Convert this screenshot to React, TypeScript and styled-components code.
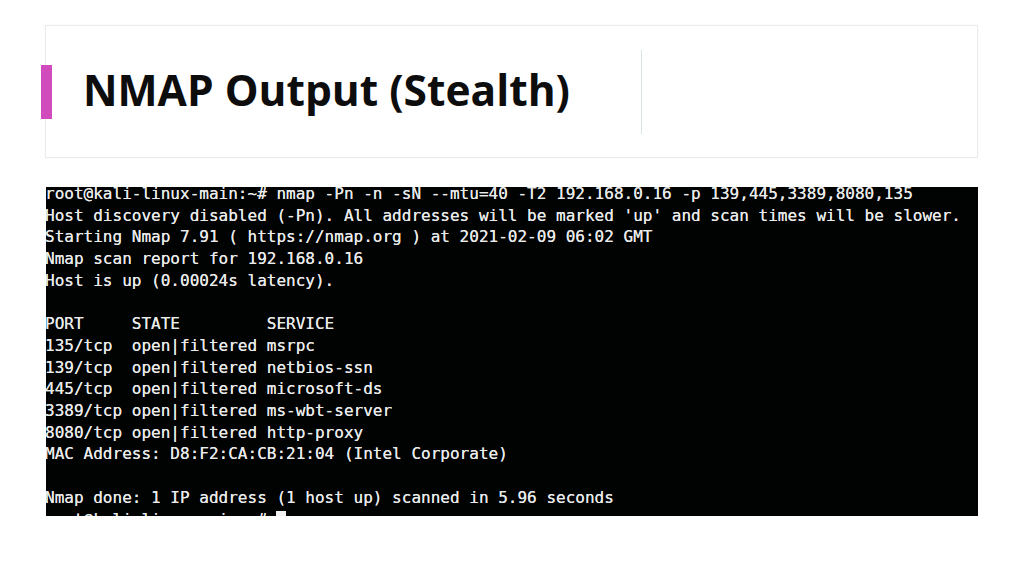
import React from "react";
import styled, { createGlobalStyle } from "styled-components";

const Global = createGlobalStyle`
  html, body { margin: 0; padding: 0; background: #ffffff; }
  body { font-family: "Open Sans", "Noto Sans", sans-serif; }
`;

const Page = styled.div`
  width: 1024px;
  height: 575px;
  box-sizing: border-box;
  padding: 25px 46px 0 45px;
  display: flex;
  flex-direction: column;
  gap: 29px;
  overflow: hidden;
`;

const HeaderCard = styled.header`
  height: 133px;
  box-sizing: border-box;
  border: 1px solid #e9ecec;
  box-shadow: 0 0 2px rgba(0, 0, 0, 0.04);
  display: flex;
  align-items: center;
`;

const Accent = styled.div`
  width: 11px;
  height: 54px;
  margin-left: -5px;
  background: #d04cbd;
  flex: 0 0 auto;
`;

const Title = styled.h1`
  margin: 0 0 3px 0;
  padding-left: 31px;
  width: 589px;
  box-sizing: border-box;
  font-family: "Open Sans", sans-serif;
  font-weight: 700;
  font-size: 42.5px;
  line-height: 1;
  color: #0d0d0d;
  white-space: nowrap;
`;

const Divider = styled.div`
  width: 1px;
  height: 84px;
  background: #d6e4e6;
`;

const Terminal = styled.section`
  margin-left: 1px;
  width: 932px;
  height: 329px;
  background: #010303;
  overflow: hidden;
`;

const Screen = styled.pre`
  margin: -4px 0 0 -1px;
  font-family: "DejaVu Sans Mono", "Liberation Mono", monospace;
  font-size: 16.03px;
  line-height: 21.7px;
  color: #e9eaea;
  text-shadow: 0 0 0.4px #e9eaea;
  white-space: pre;
`;

const Cursor = styled.span`
  display: inline-block;
  width: 10px;
  height: 17px;
  background: #f2f2f2;
  vertical-align: -3px;
`;

const lines = [
  "root@kali-linux-main:~# nmap -Pn -n -sN --mtu=40 -T2 192.168.0.16 -p 139,445,3389,8080,135",
  "Host discovery disabled (-Pn). All addresses will be marked 'up' and scan times will be slower.",
  "Starting Nmap 7.91 ( https://nmap.org ) at 2021-02-09 06:02 GMT",
  "Nmap scan report for 192.168.0.16",
  "Host is up (0.00024s latency).",
  "",
  "PORT     STATE         SERVICE",
  "135/tcp  open|filtered msrpc",
  "139/tcp  open|filtered netbios-ssn",
  "445/tcp  open|filtered microsoft-ds",
  "3389/tcp open|filtered ms-wbt-server",
  "8080/tcp open|filtered http-proxy",
  "MAC Address: D8:F2:CA:CB:21:04 (Intel Corporate)",
  "",
  "Nmap done: 1 IP address (1 host up) scanned in 5.96 seconds",
];

export default function App() {
  return (
    <>
      <Global />
      <Page>
        <HeaderCard>
          <Accent />
          <Title>NMAP Output (Stealth)</Title>
          <Divider />
        </HeaderCard>
        <Terminal>
          <Screen>
            {lines.join("\n")}
            {"\nroot@kali-linux-main:~# "}
            <Cursor />
          </Screen>
        </Terminal>
      </Page>
    </>
  );
}
